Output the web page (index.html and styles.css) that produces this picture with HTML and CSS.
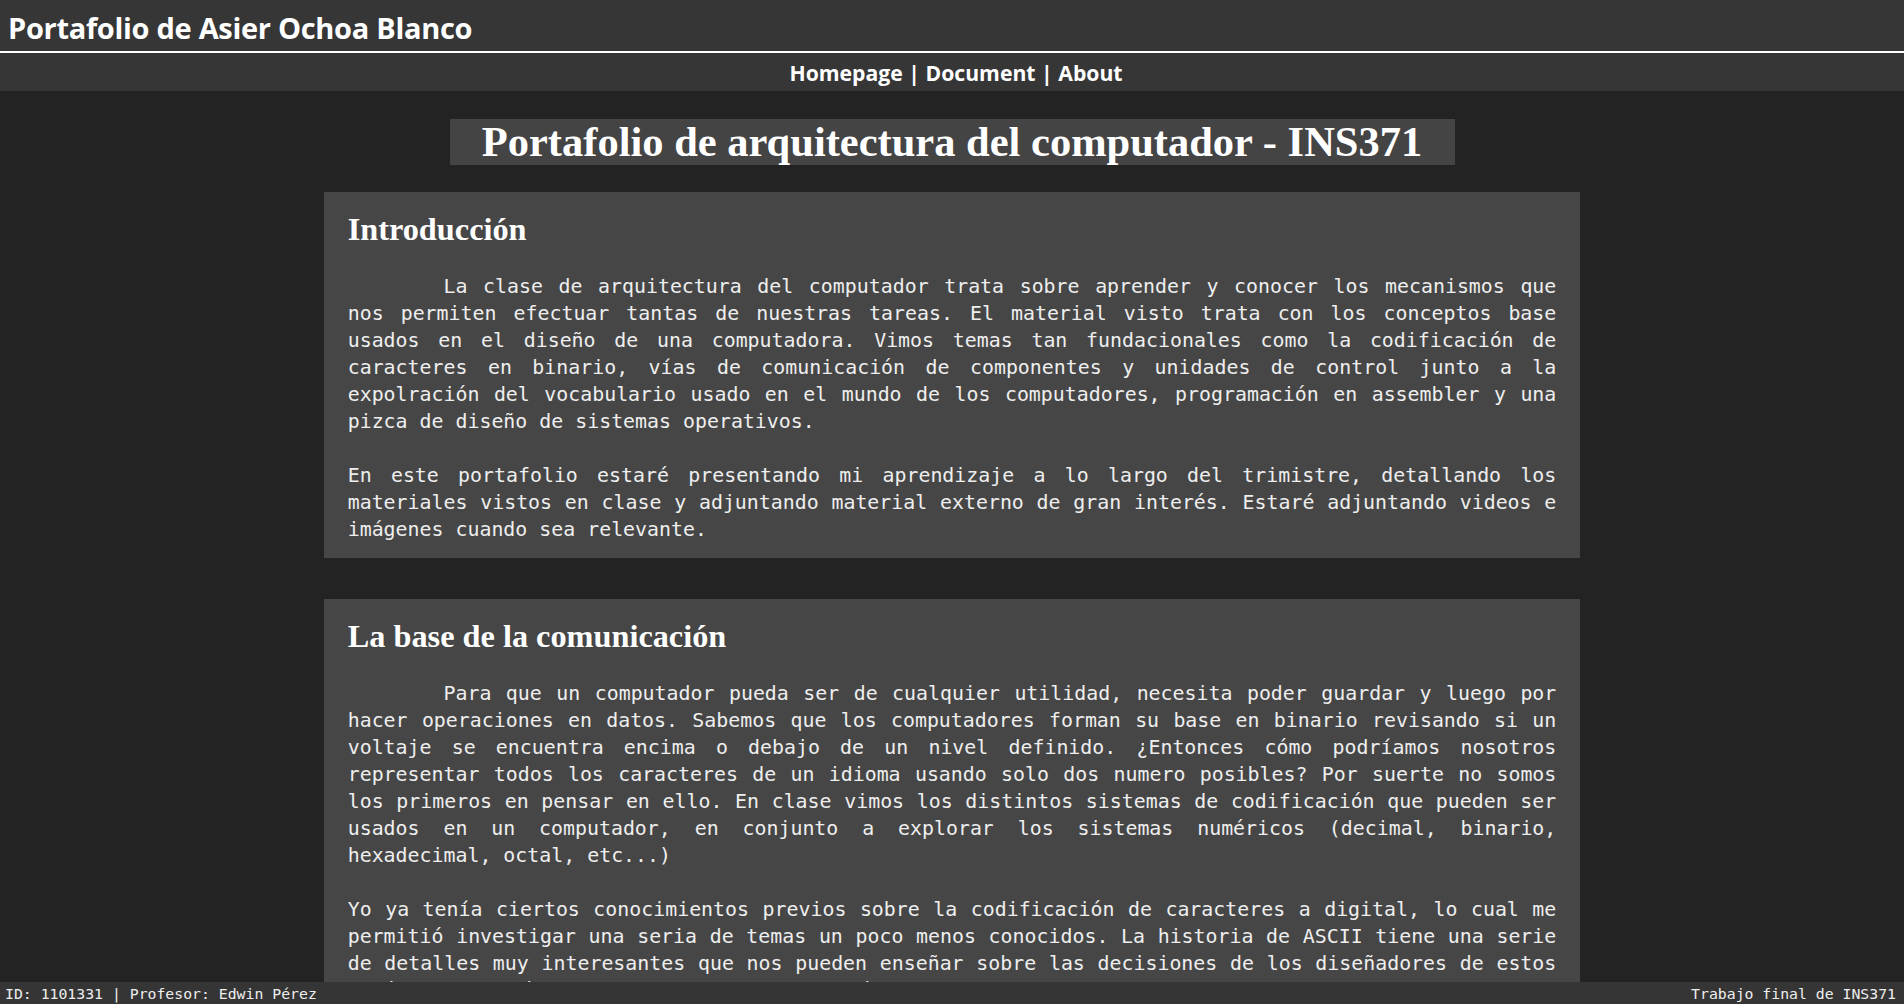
FILE: index.html
```html
<!DOCTYPE html>
<html lang="es">
<head>
<meta charset="utf-8">
<title>Portafolio de Asier Ochoa Blanco</title>
<link rel="stylesheet" href="styles.css">
</head>
<body>
<header class="site-header">
  <div class="site-title">Portafolio de Asier Ochoa Blanco</div>
</header>
<nav class="site-nav">
  <a href="#">Homepage</a> | <a href="#">Document</a> | <a href="#">About</a>
</nav>
<main class="content">
  <div class="title-wrap"><h1 class="page-title">Portafolio de arquitectura del computador - INS371</h1></div>
  <section class="card">
    <h2 class="card-title">Introducción</h2>
    <p class="text indent">La clase de arquitectura del computador trata sobre aprender y conocer los mecanismos que nos permiten efectuar tantas de nuestras tareas. El material visto trata con los conceptos base usados en el diseño de una computadora. Vimos temas tan fundacionales como la codificación de caracteres en binario, vías de comunicación de componentes y unidades de control junto a la expolración del vocabulario usado en el mundo de los computadores, programación en assembler y una pizca de diseño de sistemas operativos.</p>
    <p class="text">En este portafolio estaré presentando mi aprendizaje a lo largo del trimistre, detallando los materiales vistos en clase y adjuntando material externo de gran interés. Estaré adjuntando videos e imágenes cuando sea relevante.</p>
  </section>
  <section class="card">
    <h2 class="card-title">La base de la comunicación</h2>
    <p class="text indent">Para que un computador pueda ser de cualquier utilidad, necesita poder guardar y luego por hacer operaciones en datos. Sabemos que los computadores forman su base en binario revisando si un voltaje se encuentra encima o debajo de un nivel definido. ¿Entonces cómo podríamos nosotros representar todos los caracteres de un idioma usando solo dos numero posibles? Por suerte no somos los primeros en pensar en ello. En clase vimos los distintos sistemas de codificación que pueden ser usados en un computador, en conjunto a explorar los sistemas numéricos (decimal, binario, hexadecimal, octal, etc...)</p>
    <p class="text">Yo ya tenía ciertos conocimientos previos sobre la codificación de caracteres a digital, lo cual me permitió investigar una seria de temas un poco menos conocidos. La historia de ASCII tiene una serie de detalles muy interesantes que nos pueden enseñar sobre las decisiones de los diseñadores de estos estándares y cómo las limitaciones de su época definieron la forma en la que hoy representamos el texto.</p>
  </section>
</main>
<footer class="site-footer">
  <span>ID: 1101331 | Profesor: Edwin Pérez</span>
  <span>Trabajo final de INS371</span>
</footer>
</body>
</html>
```
FILE: styles.css
```css
html, body {
  margin: 0;
  padding: 0;
}
body {
  background: #232323;
  color: #f4f4f4;
  font-family: "Open Sans", "Noto Sans", sans-serif;
}
.site-header {
  background: #363636;
  height: 51px;
  border-bottom: 2px solid #ffffff;
  display: flex;
  align-items: center;
  padding-left: 8px;
}
.site-title {
  font-weight: 700;
  font-size: 29px;
  color: #ffffff;
  letter-spacing: -0.3px;
  padding-top: 3px;
}
.site-nav {
  background: #363636;
  height: 38px;
  display: flex;
  align-items: center;
  justify-content: center;
  padding-left: 8px;
  font-weight: 700;
  font-size: 21.2px;
  color: #ffffff;
  white-space: pre;
}
.site-nav a {
  color: #ffffff;
  text-decoration: none;
}
.content {
  padding: 28px 0 60px;
}
.title-wrap {
  display: flex;
  justify-content: center;
  margin-bottom: 27px;
}
.page-title {
  margin: 0;
  background: #444444;
  width: 1005px;
  height: 46px;
  box-sizing: border-box;
  text-align: center;
  font-family: "Liberation Serif", "DejaVu Serif", serif;
  font-weight: 700;
  font-size: 42.5px;
  line-height: 46px;
  color: #ffffff;
  overflow: hidden;
}
.card {
  width: 66%;
  margin: 0 auto 41px;
  background: #464646;
  box-sizing: border-box;
  padding: 19px 24px 15px;
}
.card-title {
  margin: 0 0 26px;
  font-family: "Liberation Serif", "DejaVu Serif", serif;
  font-weight: 700;
  font-size: 32.3px;
  line-height: 36px;
  color: #ffffff;
}
.text {
  margin: 0 0 27px;
  font-family: "DejaVu Sans Mono", "Liberation Mono", monospace;
  font-size: 19.9px;
  line-height: 27px;
  text-align: justify;
  color: #eeeeee;
}
.text:last-child {
  margin-bottom: 0;
}
.indent {
  text-indent: 8ch;
}
.site-footer {
  position: fixed;
  left: 0;
  right: 0;
  bottom: 0;
  height: 22px;
  background: #353535;
  display: flex;
  justify-content: space-between;
  align-items: center;
  padding: 0 8px 0 5px;
  font-family: "DejaVu Sans Mono", "Liberation Mono", monospace;
  font-size: 14.8px;
  color: #eeeeee;
}
```
